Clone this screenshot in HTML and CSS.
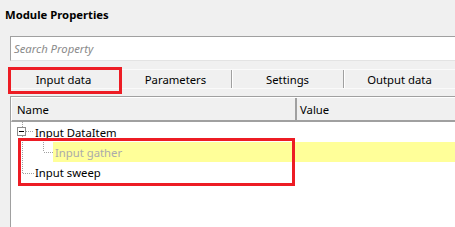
FILE: index.html
```html
<!DOCTYPE html>
<html>
<head>
<meta charset="utf-8">
<link rel="stylesheet" href="styles.css">
</head>
<body>
<div class="page">
  <div class="title">Module Properties</div>
  <div class="search"><span class="placeholder">Search Property</span></div>
  <div class="tabs">
    <div class="tab">Input data</div>
    <div class="tab">Parameters</div>
    <div class="tab">Settings</div>
    <div class="tab">Output data</div>
  </div>
  <div class="tree">
    <div class="head">
      <div class="hcol name">Name</div>
      <div class="hcol value">Value</div>
    </div>
    <div class="rows">
      <div class="row">
        <svg class="gut" width="23" height="20" viewBox="0 0 23 20">
          <line x1="10.5" y1="0" x2="10.5" y2="6" class="dot"/>
          <rect x="5.5" y="5.5" width="8" height="8" fill="#fff" stroke="#8c8c8c"/>
          <line x1="7" y1="9.5" x2="12" y2="9.5" stroke="#000"/>
          <line x1="14" y1="9.5" x2="22" y2="9.5" class="dot"/>
          <line x1="10.5" y1="14" x2="10.5" y2="20" class="dot"/>
        </svg>
        <span class="label">Input DataItem</span>
      </div>
      <div class="row">
        <svg class="gut" width="41" height="20" viewBox="0 0 41 20">
          <line x1="10.5" y1="0" x2="10.5" y2="20" class="dot"/>
          <line x1="31.5" y1="0" x2="31.5" y2="10" class="dot"/>
          <line x1="32" y1="10.5" x2="41" y2="10.5" class="dot"/>
        </svg>
        <span class="label sel">Input gather</span>
      </div>
      <div class="row">
        <svg class="gut" width="23" height="20" viewBox="0 0 23 20">
          <line x1="10.5" y1="0" x2="10.5" y2="11" class="dot"/>
          <line x1="11" y1="11.5" x2="22" y2="11.5" class="dot"/>
        </svg>
        <span class="label">Input sweep</span>
      </div>
    </div>
  </div>
  <div class="mark mark-tab"></div>
  <div class="mark mark-rows"></div>
</div>
</body>
</html>
```

FILE: styles.css
```css
html, body {
  margin: 0;
  padding: 0;
}
body {
  background: #f0f0f0;
  font-family: "Noto Sans", "Open Sans", sans-serif;
  font-size: 11.3px;
  color: #000;
  overflow: hidden;
}
.page {
  position: relative;
  width: 455px;
  height: 227px;
  overflow: hidden;
  display: flex;
  flex-direction: column;
}
.title {
  height: 30px;
  line-height: 30px;
  padding-left: 5px;
  font-weight: bold;
}
.search {
  margin: 6px 0 0 10px;
  height: 23px;
  background: #fff;
  border-top: 1px solid #a0a0a0;
  border-left: 1px solid #a0a0a0;
  border-bottom: 1px solid #e3e3e3;
  display: flex;
  align-items: center;
  padding-left: 3px;
}
.placeholder {
  font-style: italic;
  color: #8a8a8a;
}
.tabs {
  margin: 8px 0 0 8px;
  height: 18px;
  display: grid;
  grid-template-columns: repeat(4, 112px);
  border-top: 1px solid #fafafa;
  border-bottom: 1px solid #fafafa;
}
.tab {
  display: flex;
  align-items: center;
  justify-content: center;
  border-right: 1px solid #a0a0a0;
  box-shadow: 1px 0 0 #ffffff;
}
.tree {
  margin: 7px 0 0 10px;
  flex: 1;
  border-top: 1px solid #a0a0a0;
  border-left: 1px solid #a0a0a0;
  display: flex;
  flex-direction: column;
}
.head {
  height: 22px;
  display: flex;
  background: #f0f0f0;
  border-top: 1px solid #fff;
  border-left: 1px solid #fff;
  border-bottom: 2px solid #a0a0a0;
}
.hcol {
  display: flex;
  align-items: center;
}
.name {
  width: 278px;
  padding-left: 5px;
  border-right: 2px solid #a0a0a0;
}
.value {
  padding-left: 3px;
  flex: 1;
}
.rows {
  flex: 1;
  background: #fff;
  border-left: 1px solid #fff;
}
.row {
  height: 20px;
  display: flex;
  align-items: stretch;
}
.gut {
  display: block;
  flex: none;
}
.dot {
  stroke: #a0a0a0;
  stroke-width: 1;
  stroke-dasharray: 1 1;
}
.label {
  display: flex;
  align-items: center;
  padding-left: 0;
}
.label.sel {
  flex: 1;
  background: #ffff99;
  color: #ababab;
  padding-left: 2px;
}
.mark {
  position: absolute;
  border: 3px solid #ed1c24;
  box-sizing: border-box;
}
.mark-tab {
  left: 8px;
  top: 67px;
  width: 114px;
  height: 27px;
}
.mark-rows {
  left: 18px;
  top: 138px;
  width: 277px;
  height: 48px;
}
```
